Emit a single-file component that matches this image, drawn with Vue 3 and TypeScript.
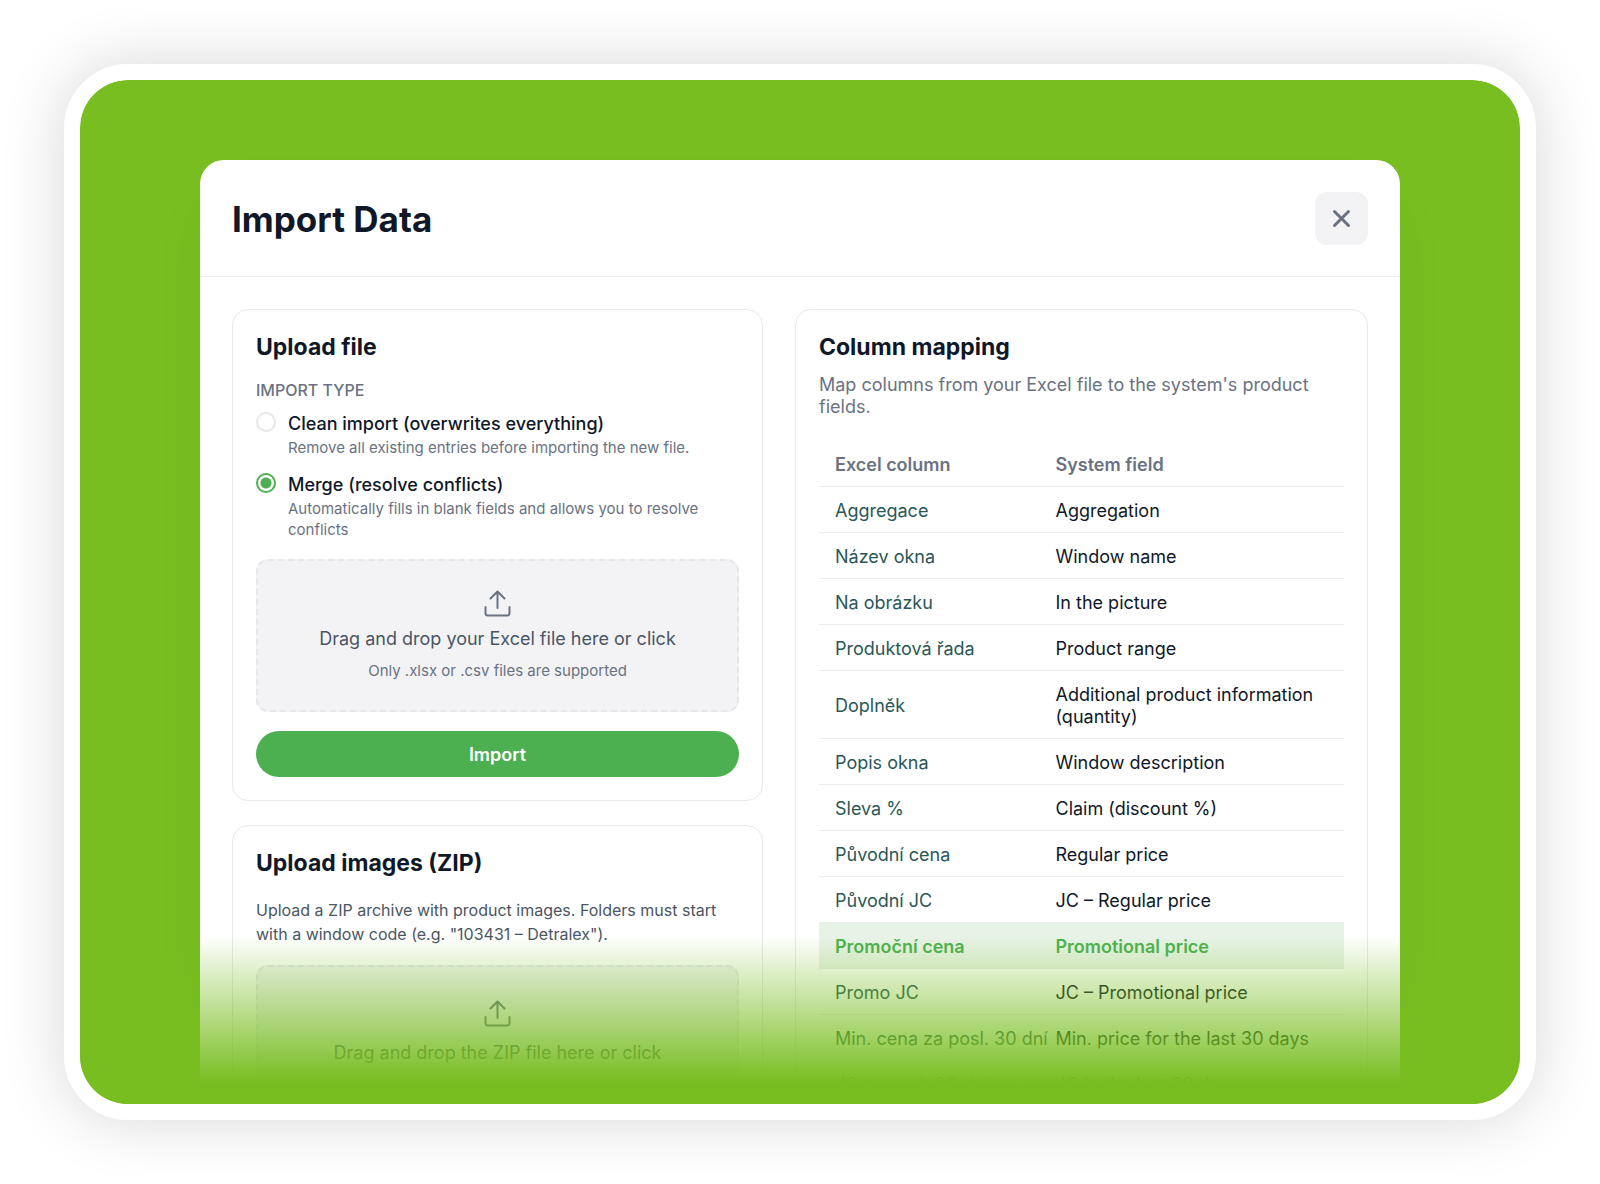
<script setup lang="ts">
import { ref } from 'vue'

interface ImportOption {
  value: string
  title: string
  hint: string
}

interface MappingRow {
  column: string
  field: string
  highlighted?: boolean
}

const options: ImportOption[] = [
  {
    value: 'clean',
    title: 'Clean import (overwrites everything)',
    hint: 'Remove all existing entries before importing the new file.',
  },
  {
    value: 'merge',
    title: 'Merge (resolve conflicts)',
    hint: 'Automatically fills in blank fields and allows you to resolve conflicts',
  },
]

const rows: MappingRow[] = [
  { column: 'Aggregace', field: 'Aggregation' },
  { column: 'Název okna', field: 'Window name' },
  { column: 'Na obrázku', field: 'In the picture' },
  { column: 'Produktová řada', field: 'Product range' },
  { column: 'Doplněk', field: 'Additional product information (quantity)' },
  { column: 'Popis okna', field: 'Window description' },
  { column: 'Sleva %', field: 'Claim (discount %)' },
  { column: 'Původní cena', field: 'Regular price' },
  { column: 'Původní JC', field: 'JC – Regular price' },
  { column: 'Promoční cena', field: 'Promotional price', highlighted: true },
  { column: 'Promo JC', field: 'JC – Promotional price' },
  { column: 'Min. cena za posl. 30 dní', field: 'Min. price for the last 30 days' },
  { column: 'JC za posl. 30 dní', field: 'JC in the last 30 days' },
]

const importType = ref('merge')
</script>

<template>
  <main class="page">
    <div class="frame">
      <section class="modal" role="dialog" aria-labelledby="modal-title">
        <header class="modal-header">
          <h1 id="modal-title">Import Data</h1>
          <button class="close" type="button" aria-label="Close">
            <svg width="19" height="19" viewBox="0 0 19 19" fill="none" stroke="currentColor" stroke-width="3" stroke-linecap="round">
              <path d="M2.500 2.500 16.500 16.500M16.500 2.500 2.500 16.500" />
            </svg>
          </button>
        </header>

        <div class="modal-body">
          <div class="column">
            <form class="card" @submit.prevent>
              <h2>Upload file</h2>
              <fieldset class="options">
                <legend>IMPORT TYPE</legend>
                <div v-for="option in options" :key="option.value" class="option">
                  <input
                    :id="`type-${option.value}`"
                    v-model="importType"
                    type="radio"
                    name="import-type"
                    :value="option.value"
                  />
                  <label :for="`type-${option.value}`">
                    <span class="option-title">{{ option.title }}</span>
                    <span class="option-hint">{{ option.hint }}</span>
                  </label>
                </div>
              </fieldset>
              <label class="dropzone">
                <input class="file" type="file" accept=".xlsx,.csv" />
                <svg width="28" height="28" viewBox="0 0 28 28" fill="none" stroke="currentColor" stroke-width="2" stroke-linecap="round" stroke-linejoin="round">
                  <path d="M13.500 18V1.500M6.500 8.500l7-7 7 7M1.500 17v6a2.500 2.500 0 0 0 2.500 2.500h19a2.500 2.500 0 0 0 2.500-2.500v-6" />
                </svg>
                <span class="drop-text">Drag and drop your Excel file here or click</span>
                <span class="drop-hint">Only .xlsx or .csv files are supported</span>
              </label>
              <button class="submit" type="submit">Import</button>
            </form>

            <form class="card" @submit.prevent>
              <h2>Upload images (ZIP)</h2>
              <p class="images-text">
                Upload a ZIP archive with product images. Folders must start with a window code (e.g. "103431 – Detralex").
              </p>
              <label class="dropzone roomy">
                <input class="file" type="file" accept=".zip" />
                <svg width="28" height="28" viewBox="0 0 28 28" fill="none" stroke="currentColor" stroke-width="2" stroke-linecap="round" stroke-linejoin="round">
                  <path d="M13.500 18V1.500M6.500 8.500l7-7 7 7M1.500 17v6a2.500 2.500 0 0 0 2.500 2.500h19a2.500 2.500 0 0 0 2.500-2.500v-6" />
                </svg>
                <span class="drop-text">Drag and drop the ZIP file here or click</span>
              </label>
            </form>
          </div>

          <section class="card">
            <h2>Column mapping</h2>
            <p class="mapping-text">Map columns from your Excel file to the system's product fields.</p>
            <table>
              <thead>
                <tr>
                  <th scope="col">Excel column</th>
                  <th scope="col">System field</th>
                </tr>
              </thead>
              <tbody>
                <tr v-for="row in rows" :key="row.column" :class="{ highlighted: row.highlighted }">
                  <td>{{ row.column }}</td>
                  <td>{{ row.field }}</td>
                </tr>
              </tbody>
            </table>
          </section>
        </div>
      </section>
      <div class="fade"></div>
    </div>
  </main>
</template>

<style>
body {
  margin: 0;
  background: #fff;
}
</style>

<style scoped>
* {
  box-sizing: border-box;
}

.page {
  height: 100vh;
  padding: 64px;
  font-family: Inter, "Liberation Sans", sans-serif;
  font-size: 18px;
  line-height: 22px;
  color: #101828;
}

.frame {
  position: relative;
  height: 100%;
  padding: 80px 120px 0;
  overflow: hidden;
  border: 16px solid #fff;
  border-radius: 64px;
  background: #78be20;
  background-clip: padding-box;
  box-shadow: 0 0 64px rgba(0, 0, 0, 0.16);
}

.modal {
  border-radius: 24px;
  background: #fff;
  box-shadow: 0 32px 64px rgba(0, 0, 0, 0.03);
}

.modal-header {
  display: flex;
  align-items: center;
  justify-content: space-between;
  padding: 32px 32px 31px;
  border-bottom: 1px solid #ebecf0;
}

h1,
h2,
p {
  margin: 0;
}

h1 {
  padding-top: 1px;
  font-size: 35px;
  line-height: 44px;
  font-weight: 700;
}

h2 {
  font-size: 23px;
  line-height: 29px;
  font-weight: 700;
}

.close {
  display: grid;
  place-items: center;
  width: 53px;
  height: 53px;
  padding: 0;
  border: 0;
  border-radius: 12px;
  background: #f3f3f6;
  color: #6a7282;
}

.modal-body {
  display: grid;
  grid-template-columns: 531fr 573fr;
  gap: 32px;
  padding: 32px;
}

.column {
  display: flex;
  flex-direction: column;
  gap: 24px;
}

.card {
  display: flex;
  flex-direction: column;
  padding: 23px;
  border: 1px solid #e8e9ed;
  border-radius: 16px;
}

.options {
  display: flex;
  flex-direction: column;
  gap: 15px;
  min-width: 0;
  margin: 18px 0 19px;
  padding: 0;
  border: 0;
}

legend {
  padding: 0 0 12px;
  font-size: 16px;
  line-height: 20px;
  font-weight: 500;
  color: #6a7282;
}

.option {
  display: flex;
  align-items: flex-start;
  gap: 12px;
}

.option input {
  appearance: none;
  flex: none;
  width: 20px;
  height: 20px;
  margin: 0;
  border: 2px solid #e5e7eb;
  border-radius: 50%;
  background: #fff;
}

.option input:checked {
  border-color: #4caf50;
  background: radial-gradient(circle, #4caf50 5px, #fff 6px);
}

.option label {
  display: flex;
  flex-direction: column;
  gap: 2px;
  padding-top: 1px;
}

.option-title {
  font-weight: 500;
}

.option-hint,
.drop-hint {
  font-size: 15px;
  line-height: 21px;
  color: #6a7282;
}

.dropzone {
  display: flex;
  flex-direction: column;
  align-items: center;
  gap: 10px;
  padding: 29px;
  border: 2px dashed #e5e7eb;
  border-radius: 12px;
  background: #f3f3f6;
  color: #6a7282;
}

.dropzone.roomy {
  gap: 14px;
  padding: 33px;
}

.file {
  position: absolute;
  width: 1px;
  height: 1px;
  opacity: 0;
}

.drop-text {
  color: #4a5565;
}

.submit {
  height: 46px;
  margin-top: 19px;
  padding: 2px 0 0;
  border: 0;
  border-radius: 23px;
  background: #4caf50;
  color: #fff;
  font: 600 18px/22px Inter, "Liberation Sans", sans-serif;
}

.images-text {
  margin: 20px 0 19px;
  font-size: 16px;
  line-height: 24px;
  color: #4a5565;
}

.mapping-text {
  margin: 12px 0 23px;
  color: #6a7282;
}

table {
  width: 100%;
  table-layout: fixed;
  border-collapse: separate;
  border-spacing: 0;
}

th,
td {
  padding: 13px 16px 10px;
  border-bottom: 1px solid #ebecf0;
  text-align: left;
}

th {
  font-weight: 600;
  color: #6a7282;
}

th:first-child {
  width: 42%;
}

td:first-child {
  color: #2a5757;
  white-space: nowrap;
}

.highlighted td,
.highlighted td:first-child {
  background: #e8f3e8;
  color: #4caf50;
  font-weight: 600;
}

.fade {
  position: absolute;
  right: 0;
  bottom: 0;
  left: 0;
  height: 168px;
  background: linear-gradient(rgba(120, 190, 32, 0), #78be20 147px);
}
</style>
